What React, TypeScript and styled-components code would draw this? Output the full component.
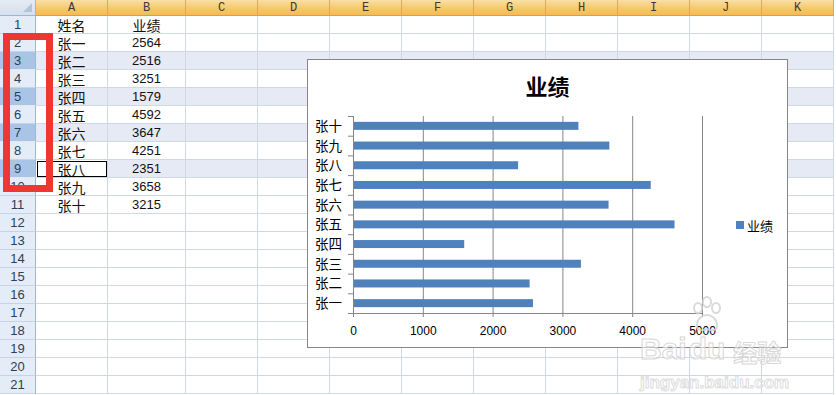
import React from 'react';
import styled, { createGlobalStyle, css } from 'styled-components';

const CJK = '"Noto Sans CJK SC", "Noto Sans", sans-serif';

const GlobalStyle = createGlobalStyle`
  html, body {
    margin: 0;
    padding: 0;
    background: #ffffff;
    overflow: hidden;
  }
`;

const columns = ['A', 'B', 'C', 'D', 'E', 'F', 'G', 'H', 'I', 'J', 'K'];

const people = [
  { name: '张一', score: 2564 },
  { name: '张二', score: 2516 },
  { name: '张三', score: 3251 },
  { name: '张四', score: 1579 },
  { name: '张五', score: 4592 },
  { name: '张六', score: 3647 },
  { name: '张七', score: 4251 },
  { name: '张八', score: 2351 },
  { name: '张九', score: 3658 },
  { name: '张十', score: 3215 },
];

const selectedRows = [3, 5, 7, 9];
const activeRow = 9;

const cellText = (row: number, col: number): string => {
  if (row === 1) return col === 0 ? '姓名' : col === 1 ? '业绩' : '';
  const p = people[row - 2];
  if (!p) return '';
  if (col === 0) return p.name;
  if (col === 1) return String(p.score);
  return '';
};

const BarChart = () => {
  const x0 = 45;
  const top = 7;
  const bottom = 204;
  const scale = 349 / 5000;
  const ordered = [...people].reverse();
  const band = (bottom - top) / ordered.length;
  const ticks = [0, 1000, 2000, 3000, 4000, 5000];

  return (
    <PlotSvg width={420} height={238} viewBox="0 0 420 238">
      {ticks.slice(1).map((t) => (
        <line key={t} x1={x0 + t * scale + 0.5} x2={x0 + t * scale + 0.5} y1={top} y2={bottom + 4} stroke="#868686" />
      ))}
      {ordered.map((p, k) => {
        const yMid = top + k * band + band / 2;
        return (
          <g key={p.name}>
            <rect x={x0 + 1} y={yMid - 4} width={p.score * scale} height={8} fill="#4f81bd" />
            <text x={34} y={yMid + 5} textAnchor="end" fontSize="13.5" fontFamily={CJK} fill="#000">
              {p.name}
            </text>
          </g>
        );
      })}
      {Array.from({ length: ordered.length + 1 }).map((_, k) => (
        <line key={k} x1={x0 - 5} x2={x0} y1={top + k * band + 0.5} y2={top + k * band + 0.5} stroke="#868686" />
      ))}
      <line x1={x0 + 0.5} x2={x0 + 0.5} y1={top} y2={bottom + 4} stroke="#868686" />
      <line x1={x0} x2={x0 + 350} y1={bottom + 0.5} y2={bottom + 0.5} stroke="#868686" />
      {ticks.map((t) => (
        <text key={t} x={x0 + t * scale + 0.5} y={226} textAnchor="middle" fontSize="12" fontFamily='"Liberation Sans", Arial, sans-serif' fill="#000">
          {t}
        </text>
      ))}
    </PlotSvg>
  );
};

const PawIcon = () => (
  <svg width="36" height="38" viewBox="0 0 36 38" fill="none" stroke="#d4d4d4" strokeWidth="2">
    <ellipse cx="9" cy="12" rx="4" ry="5" />
    <ellipse cx="18" cy="6" rx="4" ry="5" />
    <ellipse cx="27" cy="12" rx="4" ry="5" />
    <path d="M8 30 C8 22 14 19 18 19 C22 19 28 22 28 30 C28 35 22 35 18 33 C14 35 8 35 8 30 Z" />
  </svg>
);

const App = () => {
  const rows = Array.from({ length: 21 }, (_, i) => i + 1);

  return (
    <>
      <GlobalStyle />
      <Canvas>
        <Sheet>
          <Corner />
          {columns.map((c) => (
            <ColHeader key={c}>{c}</ColHeader>
          ))}
          {rows.map((r) => {
            const selected = selectedRows.includes(r);
            return (
              <React.Fragment key={r}>
                <RowHeader $selected={selected}>{r}</RowHeader>
                {columns.map((c, ci) => {
                  const text = cellText(r, ci);
                  return (
                    <Cell
                      key={c}
                      $selected={selected && !(r === activeRow && ci === 0)}
                      $active={r === activeRow && ci === 0}
                      $numeric={ci === 1 && r > 1}
                    >
                      {text}
                    </Cell>
                  );
                })}
              </React.Fragment>
            );
          })}
        </Sheet>

        <ChartFrame>
          <ChartTitle>业绩</ChartTitle>
          <ChartBody>
            <BarChart />
            <Legend>
              <LegendSwatch />
              <LegendLabel>业绩</LegendLabel>
            </Legend>
          </ChartBody>
        </ChartFrame>

        <Callout />

        <Watermark>
          <WatermarkBrand>
            <BrandWord>Bai</BrandWord>
            <PawStack>
              <PawIcon />
              <BrandWord>du</BrandWord>
            </PawStack>
            <BrandWord $cjk>经验</BrandWord>
          </WatermarkBrand>
          <WatermarkUrl>jingyan.baidu.com</WatermarkUrl>
        </Watermark>
      </Canvas>
    </>
  );
};

const Canvas = styled.div`
  position: relative;
  width: 836px;
  height: 395px;
  overflow: hidden;
  background: #ffffff;
`;

const Sheet = styled.div`
  display: grid;
  grid-template-columns: 36px 72px 78px repeat(9, 72px);
  grid-template-rows: 16px repeat(21, 18px);
  width: 836px;
`;

const Corner = styled.div`
  position: relative;
  box-sizing: border-box;
  background: linear-gradient(#e4ebf4, #d6e0ec);
  border-right: 1px solid #9eb6ce;
  border-bottom: 1px solid #9eb6ce;

  &::after {
    content: '';
    position: absolute;
    right: 3px;
    bottom: 3px;
    border-left: 9px solid transparent;
    border-bottom: 9px solid #b4c4d8;
  }
`;

const ColHeader = styled.div`
  box-sizing: border-box;
  display: flex;
  align-items: center;
  justify-content: center;
  background: linear-gradient(#fadfa8, #f5c766 60%, #f2bd56);
  border-right: 1px solid #e8a454;
  border-bottom: 1px solid #f0963a;
  font-family: "Liberation Mono", "DejaVu Sans Mono", monospace;
  font-size: 12px;
  line-height: 1;
  color: #3a3a3a;
`;

const RowHeader = styled.div<{ $selected: boolean }>`
  box-sizing: border-box;
  display: flex;
  align-items: center;
  justify-content: center;
  background: ${({ $selected }) => ($selected ? '#a9c5e6' : '#e4ecf7')};
  border-right: 1px solid #9eb6ce;
  border-bottom: 1px solid ${({ $selected }) => ($selected ? '#e1e8f2' : '#c5d3e4')};
  font-family: "Liberation Sans", Arial, sans-serif;
  font-size: 13px;
  line-height: 1;
  color: #2b3f59;
`;

const Cell = styled.div<{ $selected: boolean; $active: boolean; $numeric: boolean }>`
  box-sizing: border-box;
  display: flex;
  align-items: center;
  justify-content: center;
  background: ${({ $selected }) => ($selected ? '#e6eaf5' : '#ffffff')};
  border-right: 1px solid #d0d7e5;
  border-bottom: 1px solid #d0d7e5;
  font-family: ${({ $numeric }) => ($numeric ? '"Liberation Sans", Arial, sans-serif' : CJK)};
  font-size: ${({ $numeric }) => ($numeric ? '13px' : '14px')};
  line-height: 1;
  color: #111111;
  white-space: nowrap;

  ${({ $active }) =>
    $active &&
    css`
      outline: 1px solid #000000;
      outline-offset: -2px;
    `}
`;

const ChartFrame = styled.div`
  position: absolute;
  left: 307px;
  top: 59px;
  width: 481px;
  height: 289px;
  box-sizing: border-box;
  border: 1px solid #868686;
  background: #ffffff;
  display: flex;
  flex-direction: column;
`;

const ChartTitle = styled.div`
  height: 49px;
  display: flex;
  align-items: center;
  justify-content: center;
  font-family: ${CJK};
  font-size: 22px;
  font-weight: 700;
  color: #000000;
`;

const ChartBody = styled.div`
  flex: 1;
  display: flex;
  align-items: center;
`;

const PlotSvg = styled.svg`
  display: block;
  flex: none;
`;

const Legend = styled.div`
  display: flex;
  align-items: center;
  gap: 3px;
  margin-left: 8px;
  padding-bottom: 6px;
`;

const LegendSwatch = styled.span`
  width: 8px;
  height: 8px;
  background: #4f81bd;
`;

const LegendLabel = styled.span`
  font-family: ${CJK};
  font-size: 13px;
  color: #000000;
`;

const Callout = styled.div`
  position: absolute;
  left: 3px;
  top: 33px;
  width: 50px;
  height: 159px;
  box-sizing: border-box;
  border: 7px solid #f03535;
`;

const Watermark = styled.div`
  position: absolute;
  left: 640px;
  top: 296px;
  display: flex;
  flex-direction: column;
  align-items: flex-start;
  pointer-events: none;
  opacity: 0.85;
`;

const WatermarkBrand = styled.div`
  display: flex;
  align-items: flex-end;
  gap: 2px;
`;

const PawStack = styled.div`
  display: flex;
  flex-direction: column;
  align-items: center;
`;

const BrandWord = styled.span<{ $cjk?: boolean }>`
  font-family: ${({ $cjk }) => ($cjk ? CJK : '"Liberation Sans", Arial, sans-serif')};
  font-size: ${({ $cjk }) => ($cjk ? '24px' : '30px')};
  font-weight: 700;
  line-height: 1;
  color: rgba(255, 255, 255, 0.6);
  -webkit-text-stroke: 1px #d2d2d2;
  margin-left: ${({ $cjk }) => ($cjk ? '6px' : '0')};
`;

const WatermarkUrl = styled.span`
  margin-top: 10px;
  font-family: "Liberation Sans", Arial, sans-serif;
  font-size: 17px;
  font-weight: 700;
  line-height: 1;
  color: rgba(255, 255, 255, 0.6);
  -webkit-text-stroke: 1px #d8d8d8;
`;

export default App;
